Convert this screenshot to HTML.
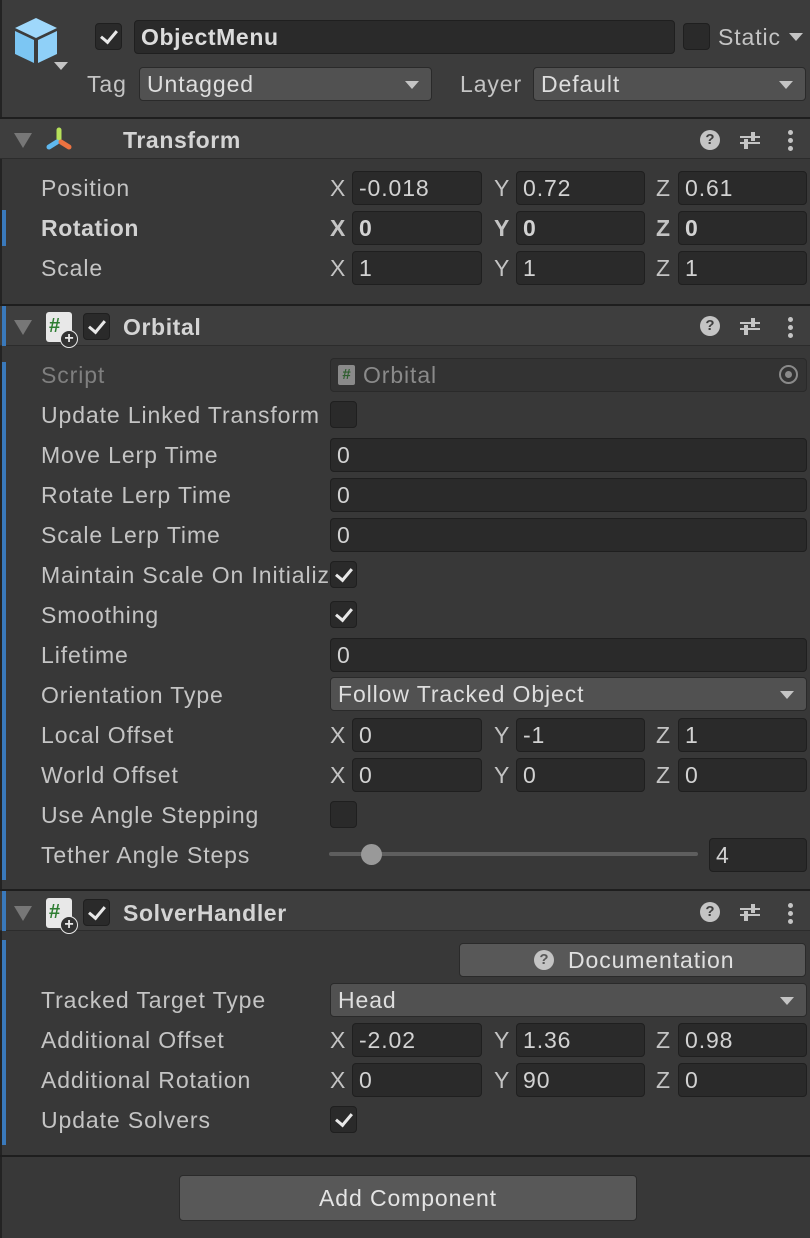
<!DOCTYPE html>
<html><head><style>
*{box-sizing:border-box;margin:0;padding:0}
body{width:810px;height:1238px;background:#383838;font-family:"Liberation Sans",sans-serif;color:#c4c4c4;font-size:23px;letter-spacing:0.9px;position:relative;overflow:hidden}
.a{position:absolute}
.lbl{position:absolute;left:41px;line-height:40px;height:40px;white-space:nowrap}
.f{position:absolute;height:34px;background:#2a2a2a;border:1px solid #1f1f1f;border-radius:4px;color:#d2d2d2;padding-left:6px;line-height:32px;white-space:nowrap;overflow:hidden}
.dd{position:absolute;height:34px;background:#515151;border:1px solid #2a2a2a;border-radius:4px;color:#dedede;padding-left:7px;line-height:32px}
.dd:after{content:"";position:absolute;right:12px;top:13px;border-left:7px solid transparent;border-right:7px solid transparent;border-top:8px solid #c4c4c4}
.ax{position:absolute;line-height:40px;color:#c4c4c4}
.cb{position:absolute;width:27px;height:27px;background:#2a2a2a;border:1px solid #1f1f1f;border-radius:4px}
.chk:after{content:"";position:absolute;left:8px;top:3px;width:7px;height:13px;border:solid #e8e8e8;border-width:0 3px 3px 0;transform:rotate(40deg)}
.sep{position:absolute;left:0;width:810px;height:2px;background:#1e1e1e}
.hdr{position:absolute;left:0;width:810px;height:40px;background:#3e3e3e;border-bottom:1px solid #2c2c2c}
.tri{position:absolute;left:14px;border-left:9px solid transparent;border-right:9px solid transparent;border-top:15px solid #777}
.ht{position:absolute;left:123px;line-height:40px;font-weight:bold;color:#d4d4d4;letter-spacing:0.6px}
.bar{position:absolute;left:2px;width:4px;background:#3a79bb}
.q{position:absolute;width:20px;height:20px;border-radius:50%;background:#c4c4c4;color:#3e3e3e;font-size:15px;font-weight:bold;text-align:center;line-height:20px;letter-spacing:0}
.dots{position:absolute;width:5px;height:5px;border-radius:50%;background:#c4c4c4;box-shadow:0 8px 0 #c4c4c4,0 16px 0 #c4c4c4}
.script{position:absolute;width:26px;height:30px;background:#e8e8e8;border-radius:3px;color:#2e7d32;font-weight:bold;font-size:20px;line-height:28px;padding-left:3px;letter-spacing:0}
.script:after{content:"+";position:absolute;right:-6px;bottom:-6px;width:16px;height:16px;border-radius:50%;background:#333;color:#e8e8e8;font-size:16px;line-height:15px;text-align:center;border:1px solid #e8e8e8}
</style></head><body>
<div class="a" style="left:0;top:0;width:2px;height:1238px;background:#232323"></div>
<div class="a" style="left:2px;top:0;width:808px;height:117px;background:#3c3c3c"></div>
<svg class="a" style="left:15px;top:18px" width="60" height="56" viewBox="0 0 60 56">
<polygon points="21,0 42,10 21,20 0,10" fill="#9fd8fb"/>
<polygon points="0,13 19,22 19,45 0,36" fill="#7cc6f3"/>
<polygon points="23,22 42,13 42,36 23,45" fill="#8fd0f8"/>
<polygon points="39,44 53,44 46,52" fill="#c4c4c4"/>
</svg>
<div class="cb chk" style="left:95px;top:23px"></div>
<div class="f" style="left:134px;top:20px;width:541px;height:34px;font-weight:bold;font-size:23px;color:#dcdcdc;letter-spacing:0.6px">ObjectMenu</div>
<div class="cb" style="left:683px;top:23px"></div>
<div class="ax" style="left:718px;top:17px">Static</div>
<div class="a" style="left:789px;top:33px;border-left:7px solid transparent;border-right:7px solid transparent;border-top:8px solid #c4c4c4"></div>
<div class="ax" style="left:87px;top:64px">Tag</div>
<div class="dd" style="left:139px;top:67px;width:293px">Untagged</div>
<div class="ax" style="left:460px;top:64px">Layer</div>
<div class="dd" style="left:533px;top:67px;width:273px">Default</div>
<div class="sep" style="top:117px"></div>

<div class="hdr" style="top:119px"></div>
<div class="tri" style="top:133px"></div>
<svg class="a" style="left:45px;top:127px" width="28" height="26" viewBox="0 0 28 26"><line x1="14" y1="3" x2="14" y2="12" stroke="#b6e05a" stroke-width="5" stroke-linecap="round"/><line x1="12" y1="15" x2="4" y2="20" stroke="#5fb8ef" stroke-width="5" stroke-linecap="round"/><line x1="16" y1="15" x2="24" y2="20" stroke="#ec7240" stroke-width="5" stroke-linecap="round"/></svg>
<div class="ht" style="top:120px">Transform</div>
<div class="q" style="left:700px;top:130px">?</div>
<svg class="a" style="left:739px;top:130px" width="22" height="20"><path d="M1 7h20M1 13h20" stroke="#c4c4c4" stroke-width="2"/><path d="M14 2v9M7 9v10" stroke="#c4c4c4" stroke-width="4"/></svg>
<div class="dots" style="left:788px;top:130px"></div>

<div class="lbl" style="top:168px">Position</div>
<div class="ax" style="left:330px;top:168px">X</div><div class="f" style="left:352px;top:171px;width:130px">-0.018</div>
<div class="ax" style="left:494px;top:168px">Y</div><div class="f" style="left:516px;top:171px;width:129px">0.72</div>
<div class="ax" style="left:656px;top:168px">Z</div><div class="f" style="left:678px;top:171px;width:129px">0.61</div>
<div class="bar" style="top:210px;height:36px"></div>
<div class="lbl" style="top:208px;font-weight:bold;color:#d2d2d2;letter-spacing:0.6px">Rotation</div>
<div class="ax" style="left:330px;top:208px;font-weight:bold">X</div><div class="f" style="left:352px;top:211px;width:130px;font-weight:bold">0</div>
<div class="ax" style="left:494px;top:208px;font-weight:bold">Y</div><div class="f" style="left:516px;top:211px;width:129px;font-weight:bold">0</div>
<div class="ax" style="left:656px;top:208px;font-weight:bold">Z</div><div class="f" style="left:678px;top:211px;width:129px;font-weight:bold">0</div>
<div class="lbl" style="top:248px">Scale</div>
<div class="ax" style="left:330px;top:248px">X</div><div class="f" style="left:352px;top:251px;width:130px">1</div>
<div class="ax" style="left:494px;top:248px">Y</div><div class="f" style="left:516px;top:251px;width:129px">1</div>
<div class="ax" style="left:656px;top:248px">Z</div><div class="f" style="left:678px;top:251px;width:129px">1</div>
<div class="sep" style="top:304px"></div>

<div class="hdr" style="top:306px"></div>
<div class="bar" style="top:306px;height:40px"></div>
<div class="bar" style="top:362px;height:518px"></div>
<div class="tri" style="top:320px"></div>
<div class="script" style="left:46px;top:312px">#</div>
<div class="cb chk" style="left:83px;top:313px"></div>
<div class="ht" style="top:307px">Orbital</div>
<div class="q" style="left:700px;top:316px">?</div>
<svg class="a" style="left:739px;top:316px" width="22" height="20"><path d="M1 7h20M1 13h20" stroke="#c4c4c4" stroke-width="2"/><path d="M14 2v9M7 9v10" stroke="#c4c4c4" stroke-width="4"/></svg>
<div class="dots" style="left:788px;top:317px"></div>

<div class="lbl" style="top:355px;color:#7f7f7f">Script</div>
<div class="f" style="left:330px;top:358px;width:477px;background:#333;border-color:#2a2a2a;color:#8a8a8a;padding-left:32px">Orbital</div>
<div class="a" style="left:338px;top:365px;width:17px;height:20px;background:#8a8a8a;border-radius:2px;color:#2e5e2e;font-size:15px;font-weight:bold;text-align:center;line-height:20px;letter-spacing:0">#</div>
<div class="a" style="left:779px;top:365px;width:19px;height:19px;border:2px solid #8a8a8a;border-radius:50%"></div>
<div class="a" style="left:785px;top:371px;width:7px;height:7px;background:#8a8a8a;border-radius:50%"></div>
<div class="lbl" style="top:395px">Update Linked Transform</div><div class="cb" style="left:330px;top:401px"></div>
<div class="lbl" style="top:435px">Move Lerp Time</div><div class="f" style="left:330px;top:438px;width:477px">0</div>
<div class="lbl" style="top:475px">Rotate Lerp Time</div><div class="f" style="left:330px;top:478px;width:477px">0</div>
<div class="lbl" style="top:515px">Scale Lerp Time</div><div class="f" style="left:330px;top:518px;width:477px">0</div>
<div class="lbl" style="top:555px;width:287px;overflow:hidden">Maintain Scale On Initialize</div><div class="cb chk" style="left:330px;top:561px"></div>
<div class="lbl" style="top:595px">Smoothing</div><div class="cb chk" style="left:330px;top:601px"></div>
<div class="lbl" style="top:635px">Lifetime</div><div class="f" style="left:330px;top:638px;width:477px">0</div>
<div class="lbl" style="top:675px">Orientation Type</div><div class="dd" style="left:330px;top:677px;width:477px">Follow Tracked Object</div>
<div class="lbl" style="top:715px">Local Offset</div>
<div class="ax" style="left:330px;top:715px">X</div><div class="f" style="left:352px;top:718px;width:130px">0</div>
<div class="ax" style="left:494px;top:715px">Y</div><div class="f" style="left:516px;top:718px;width:129px">-1</div>
<div class="ax" style="left:656px;top:715px">Z</div><div class="f" style="left:678px;top:718px;width:129px">1</div>
<div class="lbl" style="top:755px">World Offset</div>
<div class="ax" style="left:330px;top:755px">X</div><div class="f" style="left:352px;top:758px;width:130px">0</div>
<div class="ax" style="left:494px;top:755px">Y</div><div class="f" style="left:516px;top:758px;width:129px">0</div>
<div class="ax" style="left:656px;top:755px">Z</div><div class="f" style="left:678px;top:758px;width:129px">0</div>
<div class="lbl" style="top:795px">Use Angle Stepping</div><div class="cb" style="left:330px;top:801px"></div>
<div class="lbl" style="top:835px">Tether Angle Steps</div>
<div class="a" style="left:329px;top:852px;width:369px;height:4px;background:#5e5e5e;border-radius:2px"></div>
<div class="a" style="left:361px;top:844px;width:21px;height:21px;background:#999;border-radius:50%"></div>
<div class="f" style="left:709px;top:838px;width:98px">4</div>
<div class="sep" style="top:889px"></div>

<div class="hdr" style="top:891px"></div>
<div class="bar" style="top:891px;height:40px"></div>
<div class="bar" style="top:940px;height:205px"></div>
<div class="tri" style="top:906px"></div>
<div class="script" style="left:46px;top:898px">#</div>
<div class="cb chk" style="left:83px;top:899px"></div>
<div class="ht" style="top:893px">SolverHandler</div>
<div class="q" style="left:700px;top:902px">?</div>
<svg class="a" style="left:739px;top:902px" width="22" height="20"><path d="M1 7h20M1 13h20" stroke="#c4c4c4" stroke-width="2"/><path d="M14 2v9M7 9v10" stroke="#c4c4c4" stroke-width="4"/></svg>
<div class="dots" style="left:788px;top:903px"></div>

<div class="a" style="left:459px;top:943px;width:347px;height:34px;background:#585858;border:1px solid #2a2a2a;border-radius:4px;color:#e0e0e0;line-height:32px;padding-left:108px">Documentation</div>
<div class="q" style="left:534px;top:950px;background:#c4c4c4;color:#585858">?</div>
<div class="lbl" style="top:980px">Tracked Target Type</div><div class="dd" style="left:330px;top:983px;width:477px">Head</div>
<div class="lbl" style="top:1020px">Additional Offset</div>
<div class="ax" style="left:330px;top:1020px">X</div><div class="f" style="left:352px;top:1023px;width:130px">-2.02</div>
<div class="ax" style="left:494px;top:1020px">Y</div><div class="f" style="left:516px;top:1023px;width:129px">1.36</div>
<div class="ax" style="left:656px;top:1020px">Z</div><div class="f" style="left:678px;top:1023px;width:129px">0.98</div>
<div class="lbl" style="top:1060px">Additional Rotation</div>
<div class="ax" style="left:330px;top:1060px">X</div><div class="f" style="left:352px;top:1063px;width:130px">0</div>
<div class="ax" style="left:494px;top:1060px">Y</div><div class="f" style="left:516px;top:1063px;width:129px">90</div>
<div class="ax" style="left:656px;top:1060px">Z</div><div class="f" style="left:678px;top:1063px;width:129px">0</div>
<div class="lbl" style="top:1100px">Update Solvers</div><div class="cb chk" style="left:330px;top:1106px"></div>
<div class="sep" style="top:1155px"></div>

<div class="a" style="left:179px;top:1175px;width:458px;height:46px;background:#585858;border:1px solid #2a2a2a;border-radius:4px;color:#e4e4e4;text-align:center;line-height:44px">Add Component</div>
</body></html>
